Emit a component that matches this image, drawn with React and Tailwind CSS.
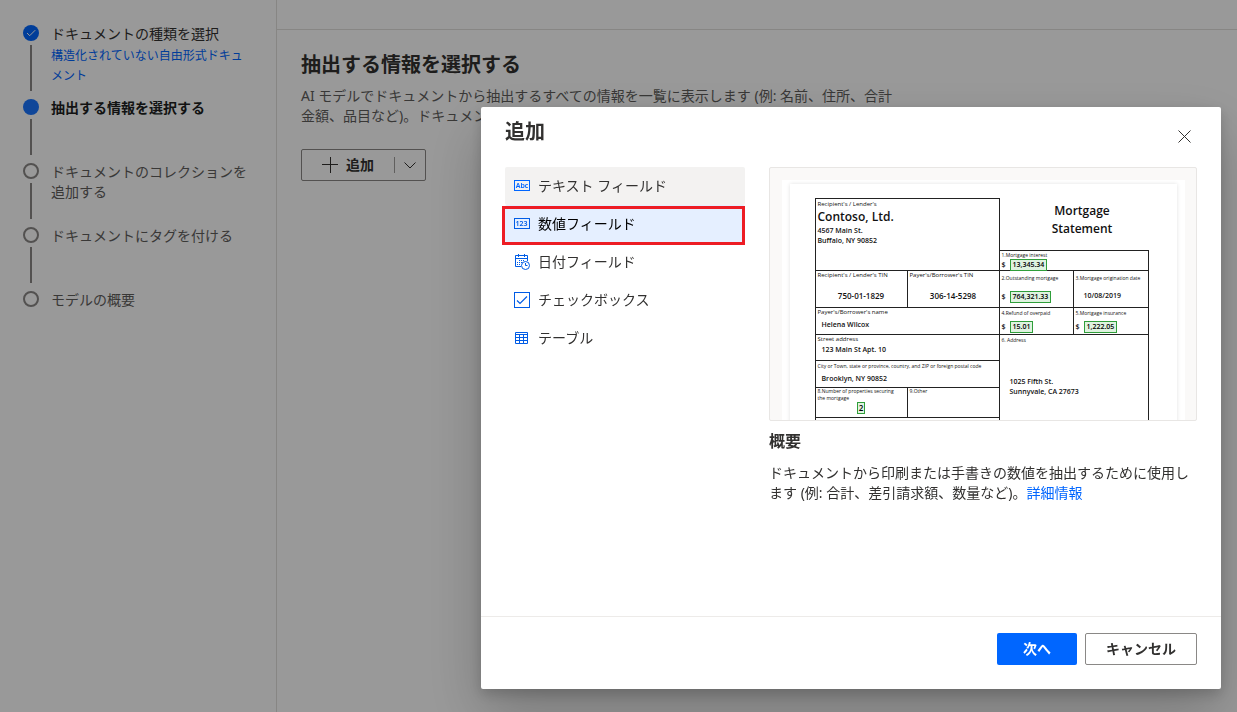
// App.jsx — model setup wizard with the "add field" dialog open on top

const STEPS = [
  { title: 'ドキュメントの種類を選択', note: '構造化されていない自由形式ドキュメント', state: 'done' },
  { title: '抽出する情報を選択する', state: 'current' },
  { title: 'ドキュメントのコレクションを追加する', state: 'todo' },
  { title: 'ドキュメントにタグを付ける', state: 'todo' },
  { title: 'モデルの概要', state: 'todo' },
]

const TITLE_STYLES = {
  done: 'text-[#323130]',
  current: 'font-bold text-[#201f1e]',
  todo: 'text-[#605e5c]',
}

const FIELD_TYPES = [
  { label: 'テキスト フィールド', icon: AbcIcon, state: 'hover' },
  { label: '数値フィールド', icon: NumberIcon, state: 'selected' },
  { label: '日付フィールド', icon: DateIcon },
  { label: 'チェックボックス', icon: CheckboxIcon },
  { label: 'テーブル', icon: TableIcon },
]

/* ---------- icons ---------- */

function AbcIcon() {
  return (
    <svg width="16" height="16" viewBox="0 0 16 16" className="text-[#0066ff]" aria-hidden="true">
      <rect x="0.5" y="2.5" width="15" height="10" fill="none" stroke="currentColor" />
      <text x="8" y="10" textAnchor="middle" fontSize="7" fontWeight="600" fill="currentColor">Abc</text>
    </svg>
  )
}

function NumberIcon() {
  return (
    <svg width="16" height="16" viewBox="0 0 16 16" className="text-[#005ce6]" aria-hidden="true">
      <rect x="0.5" y="2.5" width="15" height="10" fill="none" stroke="currentColor" />
      <text x="7.5" y="10" textAnchor="middle" fontSize="7" fontWeight="600" fill="currentColor">123</text>
    </svg>
  )
}

function DateIcon() {
  return (
    <svg width="16" height="16" viewBox="0 0 16 16" fill="none" stroke="currentColor" className="text-[#005ce6]" aria-hidden="true">
      <path d="M7 12.5H1.5v-11h12V7M1.5 4.5h12M4.5 0v3M10.5 0v3" />
      <path d="M5 6.5h1M7 6.5h1M9 6.5h1M3 8.5h1M5 8.5h1M7 8.5h1M3 10.5h1M5 10.5h1" />
      <circle cx="11.5" cy="11.5" r="4" />
      <path d="M11.5 9v2.5h2" />
    </svg>
  )
}

function CheckboxIcon() {
  return (
    <svg width="16" height="16" viewBox="0 0 16 16" fill="none" stroke="currentColor" className="text-[#005ce6]" aria-hidden="true">
      <rect x="0.5" y="0.5" width="15" height="15" />
      <path d="M3 8.5 6 11.5 13 4.5" strokeWidth="1.2" />
    </svg>
  )
}

function TableIcon() {
  return (
    <svg width="16" height="16" viewBox="0 0 16 16" fill="none" stroke="currentColor" className="text-[#005ce6]" aria-hidden="true">
      <path d="M1.5 2.5h12v11h-12zM1 4.5h13M1.5 7.5h12M1.5 10.5h12M5.5 4v9.5M9.5 4v9.5" />
    </svg>
  )
}

/* ---------- wizard behind the dialog ---------- */

function StepMarker({ state }) {
  if (state === 'done') {
    return (
      <span className="flex size-4 items-center justify-center rounded-full bg-[#0066ff]">
        <svg width="10" height="8" viewBox="0 0 10 8" fill="none" stroke="white" aria-hidden="true">
          <path d="M1 4 3.7 6.7 9.2 1.2" />
        </svg>
      </span>
    )
  }
  if (state === 'current') return <span className="size-4 rounded-full bg-[#1a75ff]" />
  return <span className="size-4 rounded-full border-2 border-[#8a8886]" />
}

function Stepper() {
  return (
    <nav className="w-[277px] shrink-0 border-r border-[#e1dfdd] py-6 pr-6 pl-[23px]">
      <ol>
        {STEPS.map((step, i) => {
          const last = i === STEPS.length - 1
          return (
            <li key={step.title} className="flex min-h-16 gap-3">
              <div className="flex flex-col items-center pt-px">
                <StepMarker state={step.state} />
                {!last && <span className="mt-1 mb-[7px] w-0.5 flex-1 bg-[#8a8886]" />}
              </div>
              <div className="flex-1 pb-3 text-sm leading-5">
                <p className={TITLE_STYLES[step.state]}>{step.title}</p>
                {step.note && (
                  <a href="#type" className="mt-0.5 block text-xs leading-5 text-[#0066ff]">{step.note}</a>
                )}
              </div>
            </li>
          )
        })}
      </ol>
    </nav>
  )
}

function WizardPage() {
  return (
    <div className="flex min-h-screen bg-white">
      <Stepper />
      <main className="flex-1">
        <div className="h-[30px] border-b border-[#e1dfdd]" />
        <div className="px-6 pt-[21px]">
          <h1 className="text-xl leading-7 font-bold text-[#323130]">抽出する情報を選択する</h1>
          <p className="mt-[7px] max-w-[600px] text-sm leading-5 text-[#605e5c]">
            AI モデルでドキュメントから抽出するすべての情報を一覧に表示します (例: 名前、住所、合計金額、品目など)。ドキュメント
          </p>
          <div className="mt-[23px] flex h-8 w-[125px] items-center rounded-xs border border-[#8a8886] text-[#323130]">
            <button type="button" className="flex h-full flex-1 items-center justify-end gap-2 pr-5 text-sm font-bold">
              <svg width="16" height="16" viewBox="0 0 16 16" fill="none" stroke="currentColor" aria-hidden="true">
                <path d="M8.5 0v16M0 7.5h16" />
              </svg>
              追加
            </button>
            <span className="h-4 w-px bg-[#a19f9d]" />
            <button type="button" aria-label="その他" className="flex h-full w-[30px] items-center justify-center">
              <svg width="12" height="7" viewBox="0 0 12 7" fill="none" stroke="currentColor" aria-hidden="true">
                <path d="M0.5 0.5 6 6 11.5 0.5" />
              </svg>
            </button>
          </div>
        </div>
      </main>
    </div>
  )
}

/* ---------- sample document shown in the preview ---------- */

function Amount({ children }) {
  return (
    <span className="flex items-center gap-1">
      $<mark className="border border-[#2f9e3a] bg-[#dff3e0] px-[2px] leading-[10px] text-black">{children}</mark>
    </span>
  )
}

function SampleDocument() {
  return (
    <div className="flex h-[254px] justify-center overflow-hidden rounded-xs border border-[#e8e6e4] bg-[#faf9f8] px-3 pt-3">
      <div className="flex-1 bg-white px-2 pt-1">
        <div className="flex h-[250px] pt-3.5 pr-7 pl-[25px] font-['Open_Sans',sans-serif] text-[7px] leading-[10px] font-semibold text-[#111] shadow-[0_0_4px_rgba(0,0,0,0.12)]">
          {/* lender and borrower */}
          <div className="w-[185px] border-x border-t border-[#222]">
            <div className="h-[72px] border-b border-[#222] px-0.5 pt-px">
              <p className="text-[6px] leading-[8px] font-normal">Recipient's / Lender's</p>
              <p className="text-[12px] leading-[18px]">Contoso, Ltd.</p>
              <p>4567 Main St.</p>
              <p>Buffalo, NY 90852</p>
            </div>
            <div className="flex h-[37px] border-b border-[#222]">
              <div className="w-[92px] border-r border-[#222] px-0.5">
                <p className="text-[6px] leading-[8px] font-normal">Recipient's / Lender's TIN</p>
                <p className="pt-3 text-center text-[8px]">750-01-1829</p>
              </div>
              <div className="flex-1 px-0.5">
                <p className="text-[6px] leading-[8px] font-normal">Payer's/Borrower's TIN</p>
                <p className="pt-3 text-center text-[8px]">306-14-5298</p>
              </div>
            </div>
            <div className="h-[27px] border-b border-[#222] px-0.5">
              <p className="text-[6px] leading-[8px] font-normal">Payer's/Borrower's name</p>
              <p className="px-1 pt-1">Helena Wilcox</p>
            </div>
            <div className="h-[26px] border-b border-[#222] px-0.5">
              <p className="text-[6px] leading-[8px] font-normal">Street address</p>
              <p className="px-1 pt-0.5">123 Main St Apt. 10</p>
            </div>
            <div className="h-[27px] border-b border-[#222] px-0.5">
              <p className="text-[5px] leading-[10px] font-normal whitespace-nowrap">
                City or Town, state or province, country, and ZIP or foreign postal code
              </p>
              <p className="px-1 pt-[3px]">Brooklyn, NY 90852</p>
            </div>
            <div className="flex h-[30px] border-b border-[#222] text-[5px] leading-[7px] font-normal">
              <div className="w-[92px] border-r border-[#222] px-0.5">
                <p>8.Number of properties securing<br />the mortgage</p>
                <p className="text-center text-[8px] leading-[10px] font-semibold">
                  <mark className="inline-block border border-[#2f9e3a] bg-[#dff3e0] px-px text-black">2</mark>
                </p>
              </div>
              <p className="flex-1 px-0.5">9.Other</p>
            </div>
          </div>

          {/* amounts */}
          <div className="w-[149px]">
            <p className="h-[52px] pt-1 pl-4 text-center text-[12px] leading-[18px]">
              Mortgage<br />Statement
            </p>
            <div className="h-[200px] border-t border-r border-[#222]">
              <div className="h-[20px] border-b border-[#222] px-0.5">
                <p className="text-[5px] leading-[8px] font-normal">1.Mortgage interest</p>
                <Amount>13,345.34</Amount>
              </div>
              <div className="flex h-[37px] border-b border-[#222]">
                <div className="w-[74px] border-r border-[#222] px-0.5 pt-0.5">
                  <p className="pb-2 text-[5px] leading-[10px] font-normal">2.Outstanding mortgage</p>
                  <Amount>764,321.33</Amount>
                </div>
                <div className="flex-1 px-0.5 pt-0.5">
                  <p className="pb-2 text-[5px] leading-[10px] font-normal whitespace-nowrap">3.Mortgage origination date</p>
                  <p className="px-2">10/08/2019</p>
                </div>
              </div>
              <div className="flex h-[27px] border-b border-[#222]">
                <div className="w-[74px] border-r border-[#222] px-0.5">
                  <p className="pb-[3px] text-[5px] leading-[10px] font-normal">4.Refund of overpaid</p>
                  <Amount>15.01</Amount>
                </div>
                <div className="flex-1 px-0.5">
                  <p className="pb-[3px] text-[5px] leading-[10px] font-normal">5.Mortgage insurance</p>
                  <Amount>1,222.05</Amount>
                </div>
              </div>
              <div className="px-0.5">
                <p className="text-[5px] leading-[10px] font-normal">6. Address</p>
                <p className="px-2 pt-8">1025 Fifth St.<br />Sunnyvale, CA 27673</p>
              </div>
            </div>
          </div>
        </div>
      </div>
    </div>
  )
}

/* ---------- dialog ---------- */

function FieldTypeItem({ label, icon: Icon, state }) {
  const bg = state === 'selected' ? 'bg-[#e5efff] text-black' : state === 'hover' ? 'bg-[#f3f2f1]' : ''
  return (
    <li className="relative">
      <button
        type="button"
        aria-pressed={state === 'selected'}
        className={`flex h-[38px] w-full items-center gap-2 rounded-xs pl-[9px] text-left text-sm ${bg}`}
      >
        <Icon />
        {label}
      </button>
      {state === 'selected' && (
        <span className="pointer-events-none absolute top-px right-0 -bottom-0.5 -left-[3px] border-3 border-[#ed1c24]" />
      )}
    </li>
  )
}

function AddFieldDialog() {
  return (
    <div className="fixed inset-0 flex items-stretch justify-end bg-black/40 pt-[107px] pr-4 pb-[23px] pl-4">
      <section
        role="dialog"
        aria-modal="true"
        aria-labelledby="dialog-title"
        className="flex w-full max-w-[740px] flex-col rounded-xs bg-white text-[#323130] shadow-[0_26px_58px_rgba(0,0,0,0.22),0_5px_14px_rgba(0,0,0,0.18)]"
      >
        <header className="flex h-[60px] items-start justify-between px-6 pt-[11px]">
          <h2 id="dialog-title" className="text-xl leading-7 font-bold">追加</h2>
          <button type="button" aria-label="閉じる" className="mt-3 mr-1.5">
            <svg width="13" height="13" viewBox="0 0 13 13" fill="none" stroke="currentColor" aria-hidden="true">
              <path d="M0.5 0.5 12.5 12.5M12.5 0.5 0.5 12.5" />
            </svg>
          </button>
        </header>

        <div className="flex flex-1 gap-6 px-6">
          <ul className="w-60 shrink-0">
            {FIELD_TYPES.map(type => <FieldTypeItem key={type.label} {...type} />)}
          </ul>
          <div className="min-w-0 flex-1">
            <SampleDocument />
            <h3 className="mt-2 leading-6 font-bold">概要</h3>
            <p className="mt-2.5 text-sm leading-5">
              ドキュメントから印刷または手書きの数値を抽出するために使用します (例: 合計、差引請求額、数量など)。
              <a href="#details" className="text-[#0066ff]">詳細情報</a>
            </p>
          </div>
        </div>

        <footer className="flex justify-end gap-2 border-t border-[#edebe9] px-6 pt-4 pb-6 text-sm font-bold">
          <button type="button" className="h-8 w-20 rounded-xs bg-[#0066ff] text-white">次へ</button>
          <button type="button" className="h-8 w-28 rounded-xs border border-[#8a8886]">キャンセル</button>
        </footer>
      </section>
    </div>
  )
}

export default function App() {
  return (
    <div lang="ja" className="font-['Noto_Sans','Noto_Sans_CJK_JP',sans-serif]">
      <WizardPage />
      <AddFieldDialog />
    </div>
  )
}
